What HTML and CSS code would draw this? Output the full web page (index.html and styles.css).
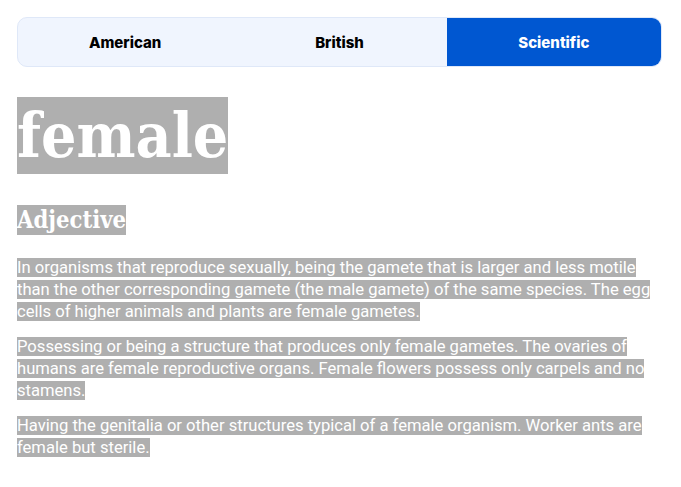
FILE: index.html
```html
<!DOCTYPE html>
<html lang="en">
<head>
  <meta charset="UTF-8">
  <meta name="viewport" content="width=device-width, initial-scale=1.0">
  <title>female - Dictionary</title>
  <link rel="stylesheet" href="styles.css">
</head>
<body>
  <div class="page">
    <div class="tabs">
      <button class="tab">American</button>
      <button class="tab">British</button>
      <button class="tab active">Scientific</button>
    </div>

    <h1 class="word"><span class="hl">female</span></h1>
    <h2 class="pos"><span class="hl">Adjective</span></h2>

    <p class="def"><span class="hl">In organisms that reproduce sexually, being the gamete that is larger and less motile than the other corresponding gamete (the male gamete) of the same species. The egg cells of higher animals and plants are female gametes.</span></p>
    <p class="def"><span class="hl">Possessing or being a structure that produces only female gametes. The ovaries of humans are female reproductive organs. Female flowers possess only carpels and no stamens.</span></p>
    <p class="def"><span class="hl">Having the genitalia or other structures typical of a female organism. Worker ants are female but sterile.</span></p>
  </div>
</body>
</html>
```

FILE: styles.css
```css
body {
  margin: 0;
  background: #fff;
  font-family: Roboto, "Liberation Sans", sans-serif;
}
.page {
  width: 645px;
  padding: 17px;
}
.tabs {
  display: grid;
  grid-template-columns: 1fr 1fr 1fr;
  height: 50px;
  border: 1px solid #dfe8f8;
  border-radius: 10px;
  background: #f0f5fe;
  overflow: hidden;
  box-sizing: border-box;
}
.tab {
  border: none;
  background: none;
  font-family: Inter, Roboto, sans-serif;
  font-weight: 800;
  font-size: 15px;
  color: #000;
  cursor: pointer;
}
.tab.active {
  background: #0057d1;
  color: #fff;
}
.hl {
  background: #afafaf;
  color: #fff;
}
.word {
  margin: 30px 0 0;
  font-family: "DejaVu Serif Condensed", "DejaVu Serif", serif;
  font-weight: bold;
  font-size: 62px;
  line-height: 77px;
}
.word .hl {
  padding: 2px 0;
}
.pos {
  margin: 31px 0 0;
  font-family: "DejaVu Serif Condensed", "DejaVu Serif", serif;
  font-weight: bold;
  font-size: 23.6px;
  line-height: 30px;
}
.pos .hl {
  padding: 1px 0;
}
.def {
  margin: 22px 0 0;
  font-size: 16.6px;
  line-height: 22px;
}
.def + .def {
  margin-top: 13px;
}
```
